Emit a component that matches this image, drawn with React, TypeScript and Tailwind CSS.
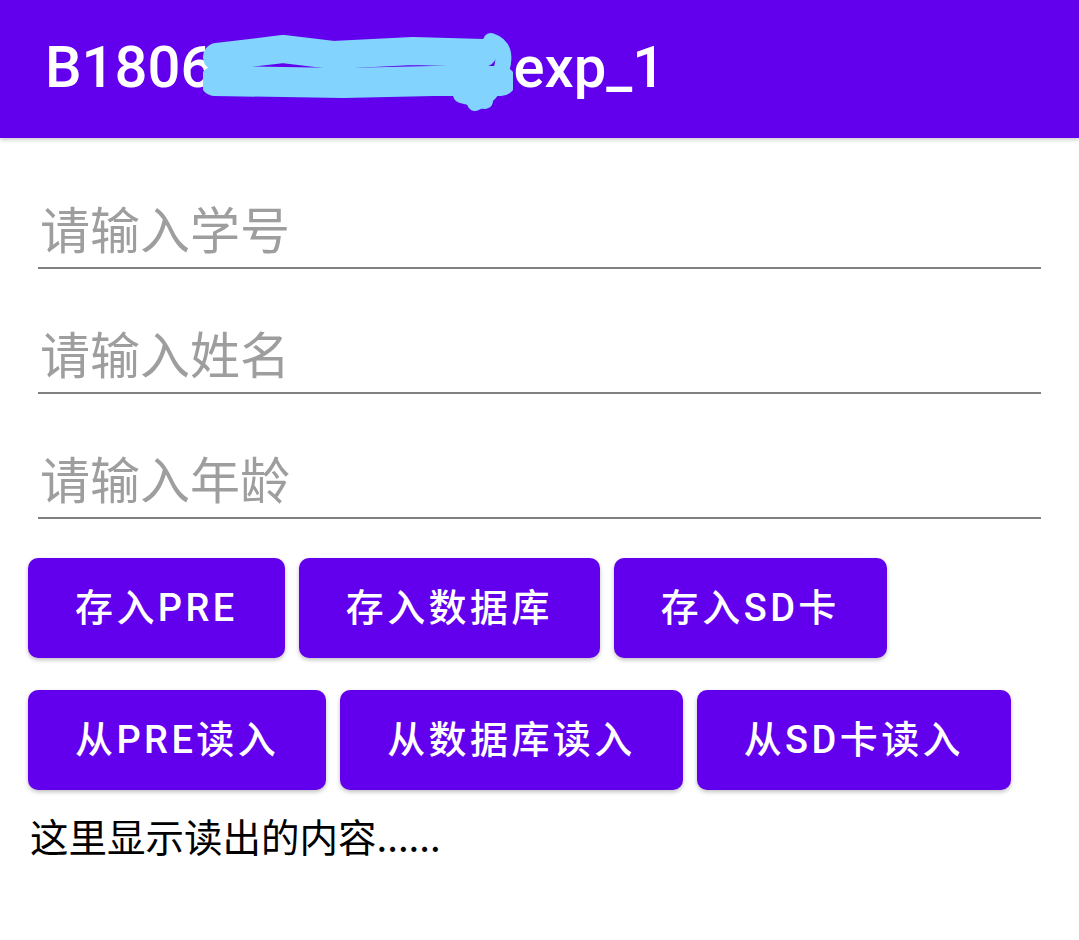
import React from "react";

const fields = ["请输入学号", "请输入姓名", "请输入年龄"];
const saveButtons = ["存入PRE", "存入数据库", "存入SD卡"];
const readButtons = ["从PRE读入", "从数据库读入", "从SD卡读入"];

function Scribble() {
  return (
    <svg
      width="310"
      height="80"
      viewBox="0 0 310 80"
      className="inline-block align-middle -my-4 -ml-[10px]"
    >
      <g
        fill="none"
        stroke="#82d4ff"
        strokeLinecap="round"
        strokeLinejoin="round"
      >
        <path d="M14 26 L80 18 L130 24 L210 20 L280 22" strokeWidth="28" />
        <path d="M12 50 L140 52 L230 50 L298 50" strokeWidth="30" />
        <path d="M288 10 Q306 16 298 40 Q290 66 272 72" strokeWidth="16" />
        <path d="M258 64 L282 70" strokeWidth="16" />
      </g>
    </svg>
  );
}

function Btn({ label }: { label: string }) {
  return (
    <button className="h-[100px] px-[47px] rounded-[10px] bg-[#6200ee] text-white text-[38px] font-medium tracking-[0.09em] shadow-[0_2px_4px_rgba(0,0,0,0.25)] whitespace-nowrap">
      {label}
    </button>
  );
}

export default function App() {
  return (
    <div
      className="w-[1079px] h-[940px] bg-white overflow-hidden"
      style={{ fontFamily: '"Roboto", "Noto Sans CJK SC", sans-serif' }}
    >
      <header className="h-[138px] bg-[#6200ee] flex items-center pl-[45px] shadow-[0_2px_4px_rgba(0,0,0,0.2)]">
        <h1 className="text-white text-[58px] font-medium leading-none whitespace-nowrap -mt-[5px]">
          B1806
          <Scribble />
          exp_1
        </h1>
      </header>

      <div className="mx-[38px] mt-[61px] flex flex-col gap-[55px]">
        {fields.map((f) => (
          <div key={f} className="border-b-2 border-[#808080] pb-[12px]">
            <div className="h-[56px] leading-[56px] text-[50px] text-[#9e9e9e] pl-[2px] font-['Noto_Sans_CJK_SC']">
              {f}
            </div>
          </div>
        ))}
      </div>

      <div className="ml-[28px] mt-[39px] flex flex-col gap-[32px]">
        <div className="flex gap-[14px]">
          {saveButtons.map((b) => (
            <Btn key={b} label={b} />
          ))}
        </div>
        <div className="flex gap-[14px]">
          {readButtons.map((b) => (
            <Btn key={b} label={b} />
          ))}
        </div>
      </div>

      <p className="ml-[30px] mt-[21px] text-[38.5px] leading-[49px] text-black font-['Noto_Sans_CJK_SC']">
        这里显示读出的内容......
      </p>
    </div>
  );
}
